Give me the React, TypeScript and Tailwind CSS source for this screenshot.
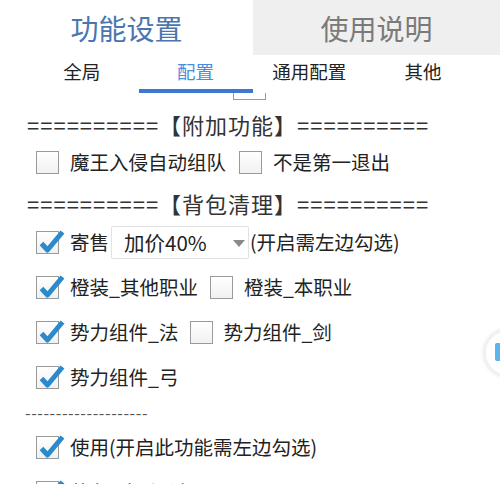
import React from 'react';

const Box = ({ checked }: { checked?: boolean }) => (
  <div className="relative w-[23px] h-[23px] shrink-0 border border-[#9a9a9a] bg-gradient-to-b from-white to-[#f1f1f1]">
    {checked && (
      <svg className="absolute left-0 top-0 overflow-visible" width="23" height="23" viewBox="0 0 23 23">
        <path d="M4.5 11.5 L10.5 18 L25.5 0" fill="none" stroke="#2b8acb" strokeWidth="5" strokeLinejoin="round" />
      </svg>
    )}
  </div>
);

const Row = ({ children }: { children: React.ReactNode }) => (
  <div className="flex items-center h-[24px] pl-[36px] text-[19.5px] text-[#222]">{children}</div>
);

const Label = ({ children, gap = 'ml-[11px]' }: { children: React.ReactNode; gap?: string }) => (
  <span className={`${gap} leading-none whitespace-nowrap`}>{children}</span>
);

export default function App() {
  const tabs = ['全局', '配置', '通用配置', '其他'];
  return (
    <div className="relative w-[500px] h-[484px] overflow-hidden bg-white font-['Noto_Sans_CJK_SC','Noto_Sans',sans-serif]">
      {/* top tabs */}
      <div className="flex h-[55px]">
        <div className="w-[253px] flex items-center justify-center text-[28px] text-[#4a76b0]">功能设置</div>
        <div className="flex-1 flex items-center justify-center bg-[#efefef] text-[28px] text-[#7a7a7a]">使用说明</div>
      </div>

      {/* sub tabs */}
      <div className="grid grid-cols-4 ml-[25px] w-[455px] h-[38px]">
        {tabs.map((t, i) => (
          <div
            key={t}
            className={
              i === 1
                ? 'flex items-center justify-center text-[18.5px] text-[#4d8be0] border-b-4 border-[#3b78d4]'
                : 'flex items-center justify-center text-[18.5px] text-[#222] border-b-4 border-transparent'
            }
          >
            {t}
          </div>
        ))}
      </div>
      <div className="ml-[233px] w-[33px] h-[7px] border-l border-r border-b border-[#999]" />

      {/* content */}
      <div className="flex flex-col">
        <div className="mt-[9px] h-[30px] flex items-center pl-[27px] text-[22px] text-[#333] tracking-[1px] whitespace-nowrap">
          ==========【附加功能】==========
        </div>

        <div className="mt-[11px]">
          <Row>
            <Box />
            <Label>魔王入侵自动组队</Label>
            <div className="ml-[13px]"><Box /></div>
            <Label>不是第一退出</Label>
          </Row>
        </div>

        <div className="mt-[14px] h-[30px] flex items-center pl-[27px] text-[22px] text-[#333] tracking-[1px] whitespace-nowrap">
          ==========【背包清理】==========
        </div>

        <div className="mt-[12px] flex flex-col gap-[21px]">
          <Row>
            <Box checked />
            <Label>寄售</Label>
            <div className="relative ml-[2px] w-[138px] h-[33px] shrink-0 flex items-center pl-[12px] border border-[#e2e2e2] rounded-[2px] bg-white">
              <span className="leading-none text-[20.5px]">加价40%</span>
              <svg className="absolute right-[3px] top-[13px]" width="12" height="7" viewBox="0 0 12 7">
                <path d="M0 0 L12 0 L6 7 Z" fill="#8a8a8a" />
              </svg>
            </div>
            <Label gap="ml-[1px]">(开启需左边勾选)</Label>
          </Row>
          <Row>
            <Box checked />
            <Label>橙装_其他职业</Label>
            <div className="ml-[12px]"><Box /></div>
            <Label>橙装_本职业</Label>
          </Row>
          <Row>
            <Box checked />
            <Label>势力组件_法</Label>
            <div className="ml-[12px]"><Box /></div>
            <Label gap="ml-[10px]">势力组件_剑</Label>
          </Row>
          <Row>
            <Box checked />
            <Label>势力组件_弓</Label>
          </Row>
        </div>

        <div className="mt-[17px] h-[12px] flex items-center pl-[25px] text-[16px] text-[#555] leading-none tracking-[0.6px] whitespace-nowrap">
          --------------------
        </div>

        <div className="mt-[17px]">
          <Row>
            <Box checked />
            <Label>使用(开启此功能需左边勾选)</Label>
          </Row>
        </div>
        <div className="mt-[21px]">
          <Row>
            <Box checked />
            <Label>装备_自动分解</Label>
          </Row>
        </div>
      </div>

      {/* floating button */}
      <div className="absolute left-[483px] top-[328px] w-[50px] h-[50px] rounded-full bg-white border-[3px] border-[#f1f1f1] shadow-[0_0_4px_rgba(0,0,0,0.08)]">
        <div className="absolute left-[9px] top-[12px] w-[12px] h-[18px] rounded-[2px] bg-[#5db4ee]" />
      </div>
    </div>
  );
}
